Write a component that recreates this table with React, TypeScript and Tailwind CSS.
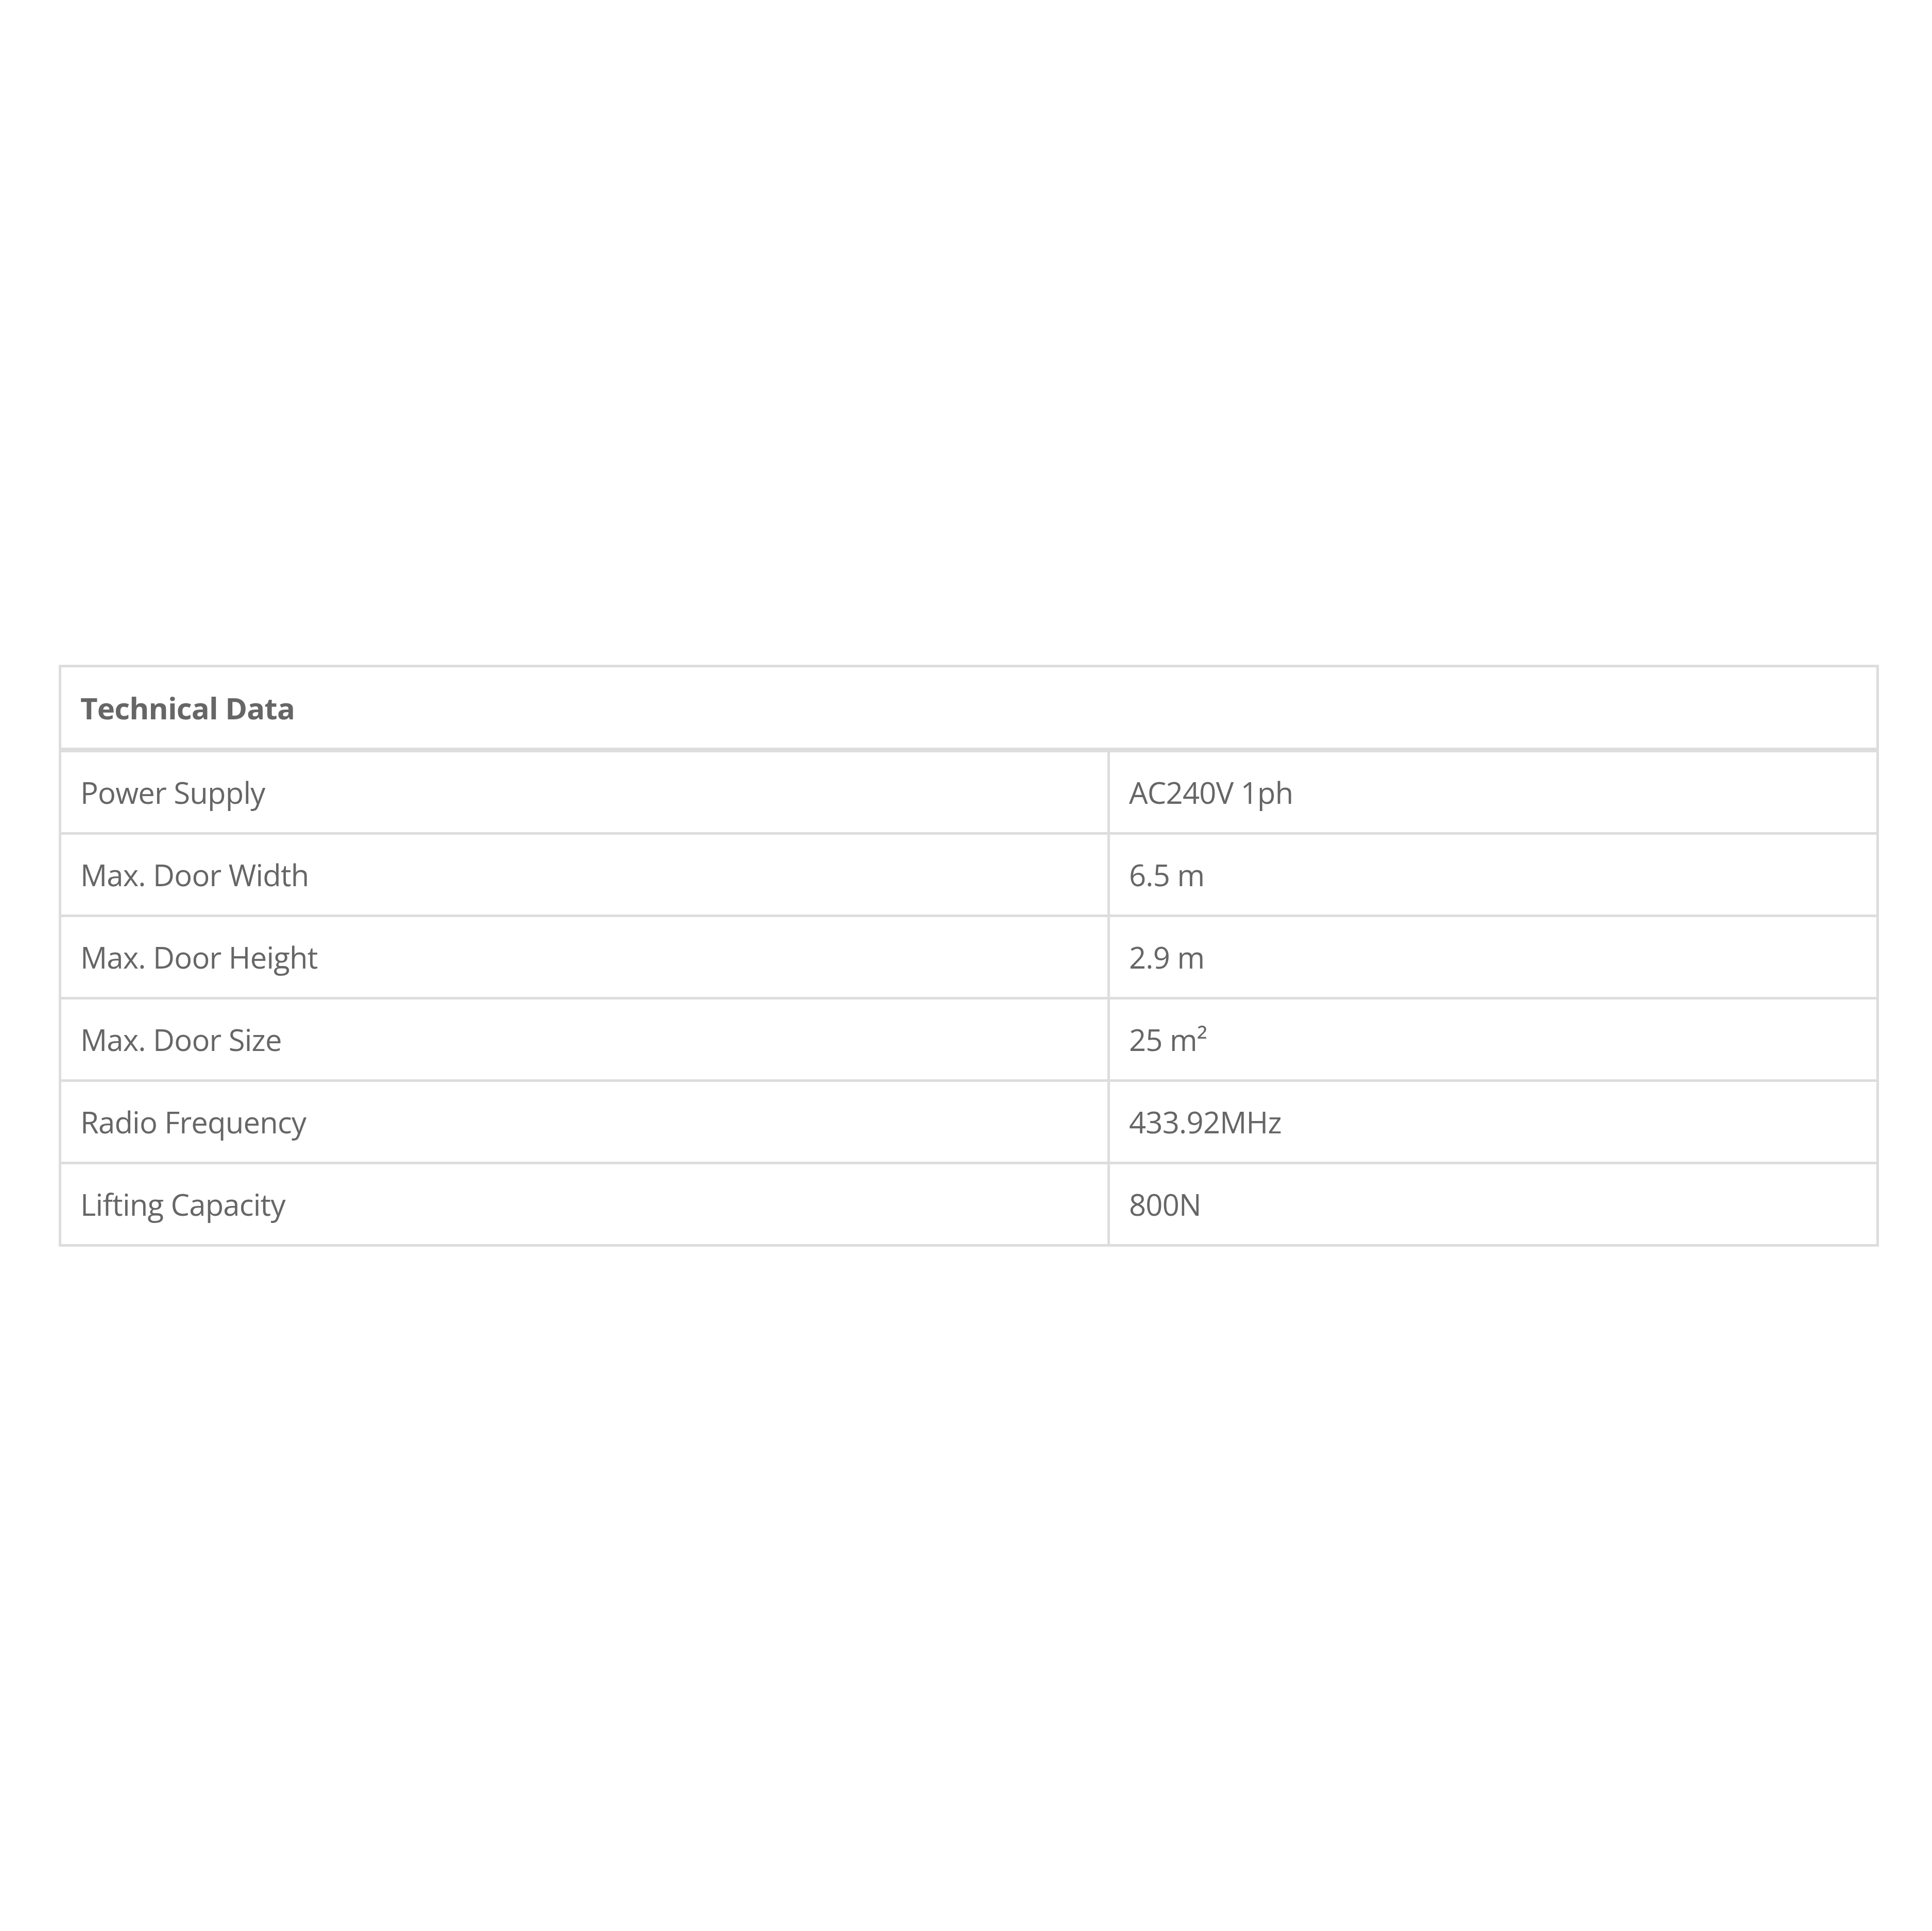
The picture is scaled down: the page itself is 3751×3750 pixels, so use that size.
import React from "react";

type Spec = {
    label: string;
    value: string;
};

const specs: Spec[] = [
    { label: "Power Supply", value: "AC240V 1ph" },
    { label: "Max. Door Width", value: "6.5 m" },
    { label: "Max. Door Height", value: "2.9 m" },
    { label: "Max. Door Size", value: "25 m²" },
    { label: "Radio Frequency", value: "433.92MHz" },
    { label: "Lifting Capacity", value: "800N" },
];

export default function App() {
    return (
        <div
            className="min-h-[3750px] w-[3751px] bg-white pt-[1291px] text-[#666666] tracking-[-0.8px]"
            style={{ fontFamily: '"Open Sans", "Noto Sans", sans-serif' }}
        >
            <div className="ml-[114px] w-[3534px] border-[5px] border-[#dddddd]">
                <div className="flex h-[165px] items-center border-b-[9px] border-[#dddddd] px-[37px] text-[58px] font-bold">
                    Technical Data
                </div>
                {specs.map((spec, i) => (
                    <div
                        key={spec.label}
                        className={
                            "grid grid-cols-[2036px_1fr] " +
                            (i < specs.length - 1 ? "border-b-[5px] border-[#dddddd]" : "")
                        }
                    >
                        <div className="flex h-[155px] items-center border-r-[5px] border-[#dddddd] px-[37px] text-[58px]">
                            {spec.label}
                        </div>
                        <div className="flex h-[155px] items-center px-[37px] text-[58px]">
                            {spec.value}
                        </div>
                    </div>
                ))}
            </div>
        </div>
    );
}
